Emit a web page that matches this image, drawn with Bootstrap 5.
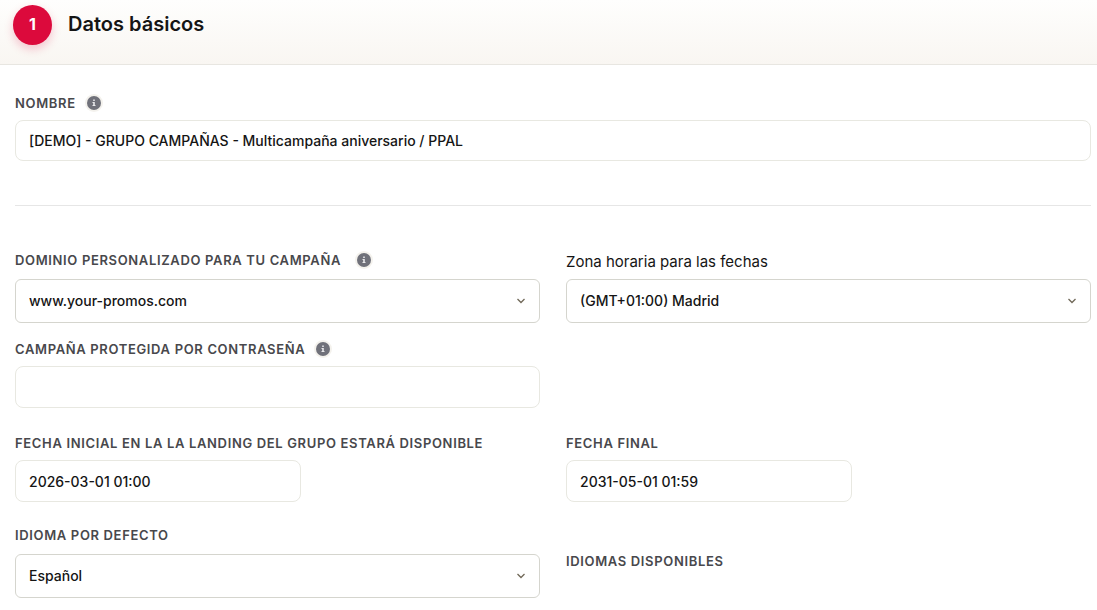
<!DOCTYPE html>
<html lang="es">
<head>
<meta charset="utf-8">
<meta name="viewport" content="width=device-width, initial-scale=1">
<title>Datos básicos</title>
<link href="https://cdn.jsdelivr.net/npm/bootstrap@5.3.0/dist/css/bootstrap.min.css" rel="stylesheet">
<style>
body{font-family:Inter,"Liberation Sans",sans-serif;font-size:15px;line-height:24px;color:#151515;background:#fff}
.step-head{min-height:65px;padding:5px 13px 0;background:linear-gradient(#fefefd,#f9f6f2);border-bottom:1px solid #e8e6e1}
.step-num{width:39px;height:40px;line-height:38px;background:#dc0a3c;font-size:16px;box-shadow:0 4px 10px rgba(220,10,60,.22)}
.step-head h1{font-size:20px;line-height:24px;font-weight:600;margin:7px 0 0 16px}
.form-body{padding:28px 6px 12px 15px}
.caps{font-size:13px;line-height:20px;font-weight:600;letter-spacing:.05em;color:#48484c;text-transform:uppercase}
.label-row{display:flex;align-items:center;gap:9px;margin-bottom:7px}
.label-row.over-select{margin-bottom:9px}
.label-row.plain{margin-bottom:5px}
.label-row.wide-gap{gap:14px}
.info-dot{width:18px;height:18px;flex:none}
.form-control,.form-select{font-size:14px;line-height:20px;font-weight:500;color:#151515;padding:0 13px}
.form-control{height:42px;border-color:#e8e8e1;border-radius:8px}
.name-input{height:41px}
.form-select{height:44px;border-color:#d5d5ce;border-radius:6px;background-size:10px 10px;background-position:right 13px center;background-image:url("data:image/svg+xml,%3Csvg xmlns='http://www.w3.org/2000/svg' viewBox='0 0 10 10'%3E%3Cpath d='M1.5 3 5 6.500 8.500 3' fill='none' stroke='%23706858' stroke-width='1.300'/%3E%3C/svg%3E")}
.section-rule{margin:44px 0;border-color:#e6e6e6;opacity:1}
.fields{--bs-gutter-x:26px}
.date-input{width:286px;max-width:100%}
.gap-password{margin-top:16px}
.gap-dates{margin-top:25px}
.gap-language{margin-top:23px}
.available{padding-top:26px}
</style>
</head>
<body>
<svg width="0" height="0" class="d-none" aria-hidden="true">
<symbol id="info" viewBox="0 0 18 18"><circle cx="9" cy="9" r="9" fill="#f4f2ed"/><circle cx="9" cy="9" r="7" fill="#70717a"/><path d="M8.200 5.500h1.600V7H8.200zM7.500 8h2.300v3h.7v1h-3v-1h.7V9h-.7z" fill="#e8e8ea"/></symbol>
</svg>
<header class="step-head d-flex align-items-start">
<span class="step-num rounded-circle text-white text-center fw-bold">1</span>
<h1>Datos básicos</h1>
</header>
<form class="form-body">
<div class="label-row"><label class="caps" for="name">Nombre</label><svg class="info-dot" aria-hidden="true"><use href="#info"/></svg></div>
<input type="text" class="form-control name-input" id="name" value="[DEMO] - GRUPO CAMPAÑAS - Multicampaña aniversario / PPAL">
<hr class="section-rule">
<div class="row fields">
<div class="col-6">
<div class="label-row over-select wide-gap"><label class="caps" for="domain">Dominio personalizado para tu campaña</label><svg class="info-dot" aria-hidden="true"><use href="#info"/></svg></div>
<select class="form-select" id="domain"><option>www.your-promos.com</option></select>
</div>
<div class="col-6">
<div class="label-row plain"><label for="zone">Zona horaria para las fechas</label></div>
<select class="form-select" id="zone"><option>(GMT+01:00) Madrid</option></select>
</div>
</div>
<div class="row fields gap-password">
<div class="col-6">
<div class="label-row"><label class="caps" for="password">Campaña protegida por contraseña</label><svg class="info-dot" aria-hidden="true"><use href="#info"/></svg></div>
<input type="text" class="form-control" id="password">
</div>
</div>
<div class="row fields gap-dates">
<div class="col-6">
<div class="label-row"><label class="caps" for="start">Fecha inicial en la la landing del grupo estará disponible</label></div>
<input type="text" class="form-control date-input" id="start" value="2026-03-01 01:00">
</div>
<div class="col-6">
<div class="label-row"><label class="caps" for="end">Fecha final</label></div>
<input type="text" class="form-control date-input" id="end" value="2031-05-01 01:59">
</div>
</div>
<div class="row fields gap-language">
<div class="col-6">
<div class="label-row over-select"><label class="caps" for="language">Idioma por defecto</label></div>
<select class="form-select" id="language"><option>Español</option></select>
</div>
<div class="col-6 available"><div class="caps">Idiomas disponibles</div></div>
</div>
</form>
<script src="https://cdn.jsdelivr.net/npm/bootstrap@5.3.0/dist/js/bootstrap.bundle.min.js"></script>
</body>
</html>
